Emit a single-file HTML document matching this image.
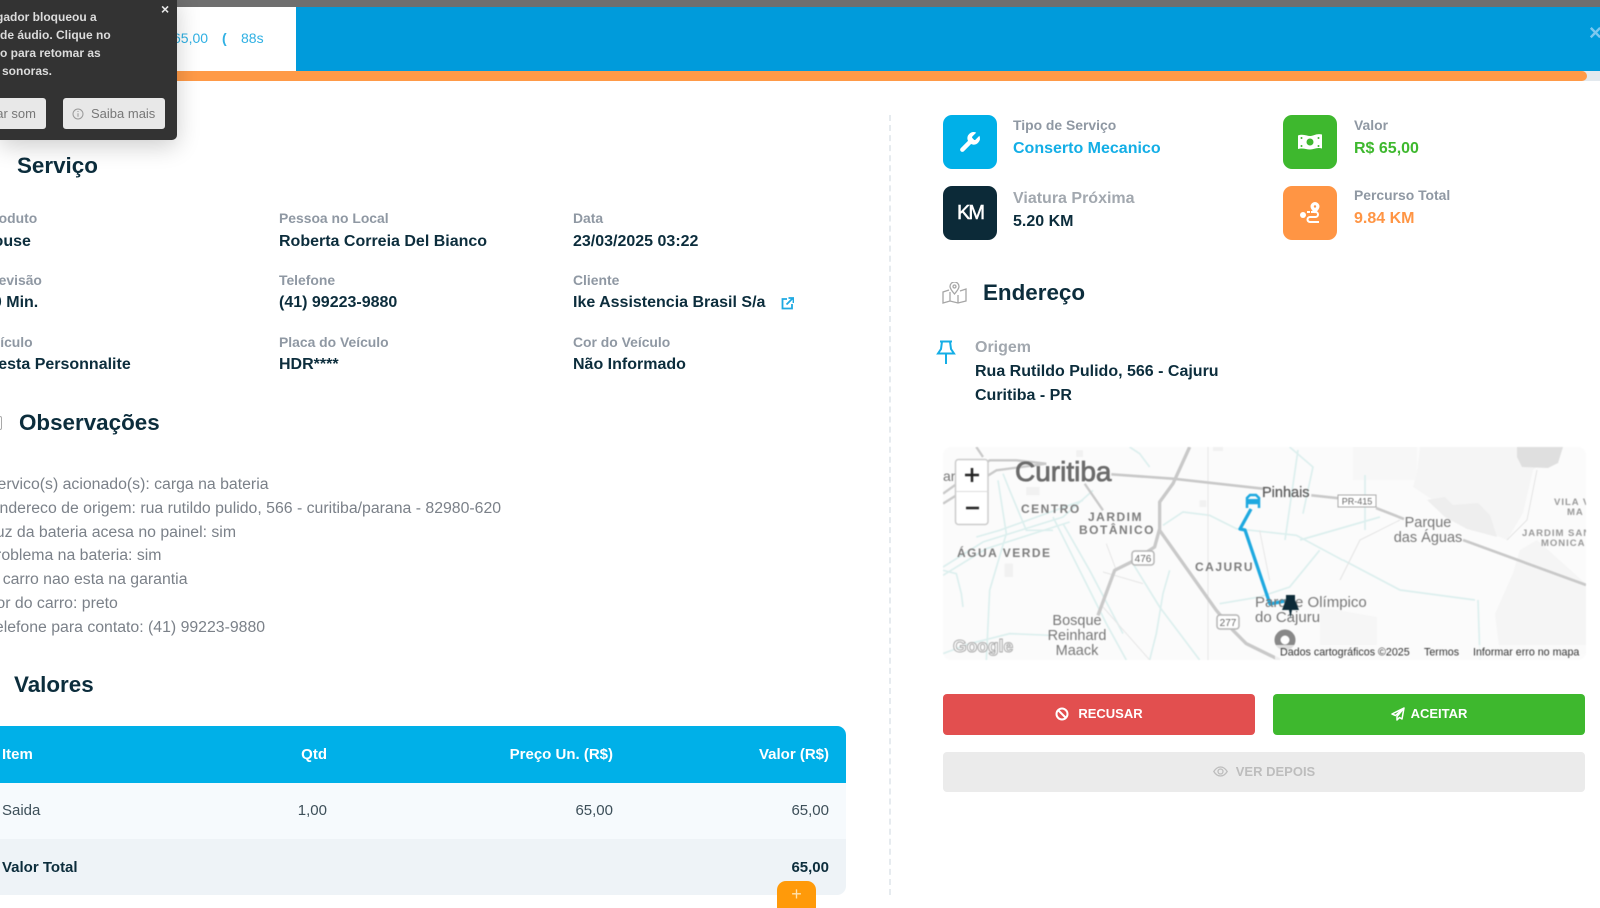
<!DOCTYPE html>
<html lang="pt-BR">
<head>
<meta charset="utf-8">
<title>Serviço</title>
<style>
html,body{margin:0;padding:0;width:1600px;height:908px;overflow:hidden;background:#fff}
body{position:relative;font-family:"Liberation Sans",sans-serif;color:#0c2d3c}
.a{position:absolute;white-space:nowrap}
.lb{font-size:13.9px;font-weight:700;color:#8f98a3;line-height:16px}
.vl{font-size:16px;font-weight:700;color:#0c2d3c;line-height:18px}
.h{font-size:22.4px;font-weight:700;color:#0c2d3c;line-height:26px}
.ic{position:absolute;width:54px;height:54px;border-radius:9px;display:flex;align-items:center;justify-content:center}
.ob{position:absolute;font-size:15.84px;line-height:24px;color:#7b8189;white-space:nowrap}
.btn{position:absolute;box-sizing:border-box;padding-bottom:2px;border-radius:4px;display:flex;align-items:center;justify-content:center;gap:9px;font-size:13px;font-weight:700;color:#fff}
.tr{position:absolute;left:0;width:846px}
.th{font-size:15px;font-weight:700;line-height:18px;color:#fff}
.td{font-size:15px;line-height:18px;color:#3d4f59}
.tt{font-size:15px;font-weight:700;line-height:18px;color:#0c2d3c}
.pt{font-size:12px;font-weight:700;line-height:18px;color:#dcdcdc}
</style>
</head>
<body>
<!-- top bars -->
<div class="a" style="left:0;top:0;width:1600px;height:7px;background:#6f6f6f"></div>
<div class="a" style="left:0;top:7px;width:1600px;height:64px;background:#009bdb"></div>
<div class="a" style="left:0;top:7px;width:296px;height:64px;background:#fff"></div>
<div class="a" style="left:173px;top:29px;font-size:14px;line-height:18px;color:#2fb0e3">65,00</div>
<div class="a" style="left:222px;top:29px;font-size:14px;line-height:18px;color:#2fb0e3;font-weight:700">(</div>
<div class="a" style="left:241px;top:29px;font-size:14px;line-height:18px;color:#2fb0e3">88s</div>
<div class="a" style="left:1589px;top:22px;font-size:22px;line-height:22px;color:#7cc8ef;font-weight:700">×</div>
<div class="a" style="left:0;top:71px;width:1600px;height:10px;background:#e3e9ee"></div>
<div class="a" style="left:0;top:71px;width:1587px;height:10px;background:#ff9a47;border-radius:0 5px 5px 0"></div>

<!-- left column -->
<div class="a h" style="left:17px;top:153px">Serviço</div>

<div class="a lb" style="left:-16px;top:210px">Produto</div>
<div class="a vl" style="left:-18px;top:233px">House</div>
<div class="a lb" style="left:279px;top:210px">Pessoa no Local</div>
<div class="a vl" style="left:279px;top:233px">Roberta Correia Del Bianco</div>
<div class="a lb" style="left:573px;top:210px">Data</div>
<div class="a vl" style="left:573px;top:233px">23/03/2025 03:22</div>

<div class="a lb" style="left:-16px;top:272px">Previsão</div>
<div class="a vl" style="left:-16px;top:294px">60 Min.</div>
<div class="a lb" style="left:279px;top:272px">Telefone</div>
<div class="a vl" style="left:279px;top:294px">(41) 99223-9880</div>
<div class="a lb" style="left:573px;top:272px">Cliente</div>
<div class="a vl" style="left:573px;top:294px">Ike Assistencia Brasil S/a</div>
<svg class="a" style="left:781px;top:297px" width="13" height="13" viewBox="0 0 13 13" fill="none" stroke="#1fa9e2" stroke-width="1.8"><path d="M6 2H1.500v9.500H11V7"/><path d="M5.500 7.500 11.500 1.500M7.500 1h5v5"/></svg>

<div class="a lb" style="left:-16px;top:334px">Veículo</div>
<div class="a vl" style="left:-16px;top:356px">Fiesta Personnalite</div>
<div class="a lb" style="left:279px;top:334px">Placa do Veículo</div>
<div class="a vl" style="left:279px;top:356px">HDR****</div>
<div class="a lb" style="left:573px;top:334px">Cor do Veículo</div>
<div class="a vl" style="left:573px;top:356px">Não Informado</div>

<div class="a h" style="left:19px;top:410px">Observações</div>
<div class="a" style="left:-6px;top:416px;width:8px;height:14px;border:1.5px solid #a9a9a9;border-radius:2px;box-sizing:border-box"></div>

<div class="ob" style="top:473px;left:-13px">Servico(s) acionado(s): carga na bateria</div>
<div class="ob" style="top:497px;left:-11px">Endereco de origem: rua rutildo pulido, 566 - curitiba/parana - 82980-620</div>
<div class="ob" style="top:521px;left:-13px">Luz da bateria acesa no painel: sim</div>
<div class="ob" style="top:544px;left:-14.500px">Problema na bateria: sim</div>
<div class="ob" style="top:568px;left:-14px">O carro nao esta na garantia</div>
<div class="ob" style="top:592px;left:-15px">Cor do carro: preto</div>
<div class="ob" style="top:616px;left:-13px">Telefone para contato: (41) 99223-9880</div>

<div class="a h" style="left:14px;top:672px">Valores</div>

<!-- table -->
<div class="tr" style="top:726px;height:57px;background:#00b0e8;border-radius:0 9px 0 0"></div>
<div class="tr" style="top:783px;height:56px;background:#f6fafd"></div>
<div class="tr" style="top:839px;height:56px;background:#eef3f7;border-radius:0 0 9px 0"></div>
<div class="a th" style="left:2px;top:746px">Item</div>
<div class="a th" style="right:1273px;top:746px">Qtd</div>
<div class="a th" style="right:987px;top:746px">Preço Un. (R$)</div>
<div class="a th" style="right:771px;top:746px">Valor (R$)</div>
<div class="a td" style="left:2px;top:802px">Saida</div>
<div class="a td" style="right:1273px;top:802px">1,00</div>
<div class="a td" style="right:987px;top:802px">65,00</div>
<div class="a td" style="right:771px;top:802px">65,00</div>
<div class="a tt" style="left:2px;top:859px">Valor Total</div>
<div class="a tt" style="right:771px;top:859px">65,00</div>
<div class="a" style="left:777px;top:881px;width:39px;height:30px;background:#ff9a0a;border-radius:9px 9px 0 0;color:#ffe3b0;font-size:18px;line-height:26px;text-align:center">+</div>

<!-- divider -->
<div class="a" style="left:889px;top:115px;height:780px;border-left:2px dashed #e6ebef"></div>

<!-- info cards -->
<div class="ic" style="left:943px;top:115px;background:#00b0e8">
<svg width="25" height="25" style="margin-left:-2px" viewBox="0 0 24 24" fill="#fff"><path d="M14.700 6.300a1 1 0 0 0 0 1.400l1.600 1.600a1 1 0 0 0 1.400 0l3.770-3.770a6 6 0 0 1-7.940 7.940l-6.910 6.910a2.120 2.120 0 0 1-3-3l6.910-6.910a6 6 0 0 1 7.940-7.940l-3.760 3.760z"/></svg>
</div>
<div class="a lb" style="left:1013px;top:117px">Tipo de Serviço</div>
<div class="a vl" style="left:1013px;top:139.500px;color:#13aee6">Conserto Mecanico</div>

<div class="ic" style="left:943px;top:186px;background:#0c2a38;color:#fff;font-size:20px;letter-spacing:-2px;-webkit-text-stroke:.5px #fff">KM</div>
<div class="a vl" style="left:1013px;top:190px;color:#a2a8af">Viatura Próxima</div>
<div class="a vl" style="left:1013px;top:213px">5.20 KM</div>

<div class="ic" style="left:1283px;top:115px;background:#3eb82e">
<svg width="26" height="20" viewBox="0 0 26 20"><path fill="#fff" d="M1 3.500c5-2 9 .5 12 .5s7-3 12-1.500v14c-5-1.500-8 1-12 1s-7-2-12-.5z"/><circle cx="13" cy="10" r="3.500" fill="#3eb82e"/><circle cx="4.500" cy="6" r="1" fill="#3eb82e"/><circle cx="21.500" cy="6" r="1" fill="#3eb82e"/><circle cx="4.500" cy="14" r="1" fill="#3eb82e"/><circle cx="21.500" cy="14" r="1" fill="#3eb82e"/></svg>
</div>
<div class="a lb" style="left:1354px;top:117px">Valor</div>
<div class="a vl" style="left:1354px;top:139.500px;color:#3eb82e">R$ 65,00</div>

<div class="ic" style="left:1283px;top:186px;background:#ff9544">
<svg width="24" height="24" viewBox="0 0 24 24" fill="none" stroke="#fff" stroke-width="2"><path d="M17 11c-2.500-2.500-3.500-4-3.500-5.500a3.500 3.500 0 0 1 7 0C20.500 7 19.500 8.500 17 11z" fill="#fff"/><circle cx="17" cy="5.500" r="1.200" fill="#ff9544" stroke="none"/><circle cx="5" cy="14" r="3" fill="#fff" stroke="none"/><path d="M13 11h4.500a2.500 2.500 0 0 1 0 5H12a2.500 2.500 0 0 0 0 5h9M9 11h3"/></svg>
</div>
<div class="a lb" style="left:1354px;top:187px">Percurso Total</div>
<div class="a vl" style="left:1354px;top:210px;color:#ff9544">9.84 KM</div>

<!-- endereço -->
<svg class="a" style="left:942px;top:282px" width="25" height="22" viewBox="0 0 25 22" fill="none" stroke="#a6a6a6" stroke-width="1.300"><path d="M12.500 12c-3-3.500-4.500-5.500-4.500-7.500a4.500 4.500 0 0 1 9 0c0 2-1.500 4-4.500 7.500z"/><circle cx="12.500" cy="4.500" r="1.500"/><path d="M7 8 1 10v11l7-2 8 2 8-2V7l-6 2M8 10v9M16 13v8"/></svg>
<div class="a h" style="left:983px;top:280px">Endereço</div>

<svg class="a" style="left:936px;top:340px" width="20" height="25" viewBox="0 0 20 25" fill="none" stroke="#14aee6" stroke-width="2"><path d="M4 1.500h12M6 1.500 5 9 2 13.500h16L15 9l-1-7.500M10 13.500V24"/></svg>
<div class="a vl" style="left:975px;top:339px;color:#a2a8af">Origem</div>
<div class="a vl" style="left:975px;top:363px">Rua Rutildo Pulido, 566 - Cajuru</div>
<div class="a vl" style="left:975px;top:387px">Curitiba - PR</div>

<!-- map -->
<svg class="a" style="left:943px;top:447px;border-radius:8px;filter:blur(.4px)" width="643" height="213" viewBox="943 447 643 213" font-family="'Liberation Sans',sans-serif">
<rect x="943" y="447" width="643" height="213" fill="#fbfbfb"/>
<path fill="#f7f7f7" d="M1353 447h64v33h-64z"/>
<path fill="#f5f5f5" d="M1417 473l3-26h140l-27 23-10 43-16 27-47-20-27-20-20-13z"/>
<path fill="#f5f5f5" d="M1513 573l7-23 17-10 49 44v70h-86l-5-40z"/>
<path fill="#f6f6f6" d="M1320 607l57 10v36h-57z"/>
<path fill="#dfdfdf" d="M1517 447h46l-5 16-10 5-26-1-5-10z"/>
<path fill="#eeeeee" d="M1427 500l18-3 8 8 25-2 12 12 7 22-30-8-22-12z"/>
<!-- teal streets, drawn in 3x crop coordinates -->
<g transform="translate(943 447) scale(.3333)" fill="none" stroke="#dcefee" stroke-width="5">
<path d="M0 360 120 285 360 210 450 130M0 385 130 305 380 225M100 270 170 250 420 160"/>
<path d="M165 100 190 260 140 430 130 639M180 80 200 130 250 250 330 250"/>
<path d="M330 210 390 330 490 530 550 639M360 230 440 370 540 560M570 350 650 480 770 639"/>
<path d="M660 235 720 195 800 205 880 245 1060 265 1200 340"/>
<path d="M620 60 590 20 560 0M0 370 40 380 55 440 60 480M0 620 80 590 200 560 320 565"/>
<path d="M680 370 660 440 640 560 620 639M830 470 950 450 1040 420 1130 310M1040 0 1110 60 1080 200"/>
</g>
<g fill="none" stroke="#dcefee" stroke-width="1.700">
<path d="M1343 560 1400 590 1475 600M1478 600 1480 660M1365 475V530M1380 517 1300 540M1298 450 1285 540"/>
</g>
<g transform="translate(943 447) scale(.3333)" fill="none" stroke="#e6e6e6" stroke-width="3">
<path d="M480 375 600 410M480 480 620 639M490 290 520 370M795 0V639M950 250 980 400"/>
</g>
<path d="M1537 470 1527 520 1507 540M1340 580 1360 540 1400 520" fill="none" stroke="#e4e4e4"/>
<g transform="translate(943 447) scale(.3333)" fill="#f1f1f1">
<rect x="400" y="10" width="20" height="20"/><rect x="250" y="120" width="40" height="25"/><rect x="185" y="350" width="25" height="40"/><rect x="770" y="160" width="20" height="20"/><rect x="810" y="0" width="30" height="12"/>
</g>
<g transform="translate(943 447) scale(.3333)" fill="none" stroke="#c9c9c9" stroke-width="10" stroke-linejoin="round">
<path d="M740 0 690 110 650 165V245L635 300 565 345 515 370 465 505"/>
<path d="M650 250 820 490 870 550 910 590 1010 639"/>
<path d="M505 82 690 95 960 125" stroke-width="8"/>
<path d="M1105 145 1200 155" stroke-width="8"/>
<path d="M0 170 160 70 310 50M0 140 140 40 220 40 310 50M100 0 120 30" stroke-width="7"/>
<path d="M425 110 480 190" stroke-width="7"/>
</g>
<path d="M1376 508 1404 519M1463 540 1586 585" fill="none" stroke="#c9c9c9" stroke-width="2.700"/>
<path d="M1251 509 1240 529 1245 530 1270 604 1290 600" fill="none" stroke="#1ea9e0" stroke-width="3.300" stroke-linejoin="round"/>
<path d="M1247 508v-10l3-3h6l3 3v10M1246 503h14" fill="none" stroke="#1ea9e0" stroke-width="2.500"/>
<rect x="1247" y="499" width="12" height="5" fill="#1ea9e0"/>
<g fill="#777">
<text x="1015" y="481" font-size="28" stroke="#6b6b6b" stroke-width=".8" fill="#6b6b6b">Curitiba</text>
<text x="943" y="481" font-size="14">ar</text>
<g font-size="12" letter-spacing="1.500" font-weight="700" fill="#7d7d7d">
<text x="1021" y="513">CENTRO</text>
<text x="1088" y="521">JARDIM</text>
<text x="1079" y="534">BOTÂNICO</text>
<text x="957" y="557">ÁGUA VERDE</text>
<text x="1195" y="571">CAJURU</text>
</g>
<g font-size="14.500" text-anchor="middle">
<text x="1077" y="625">Bosque</text>
<text x="1077" y="640">Reinhard</text>
<text x="1077" y="655">Maack</text>
<text x="1428" y="527">Parque</text>
<text x="1428" y="542">das Águas</text>
</g>
<text x="1262" y="497" font-size="14.500" fill="#5f5f5f" stroke="#5f5f5f" stroke-width=".3">Pinhais</text>
<text x="1255" y="607" font-size="15">Parque Olímpico</text>
<text x="1255" y="622" font-size="15">do Cajuru</text>
<g font-size="9.500" letter-spacing="1" font-weight="700" fill="#999">
<text x="1554" y="505">VILA V</text>
<text x="1567" y="515">MA</text>
<text x="1522" y="536">JARDIM SAN</text>
<text x="1541" y="546">MONICA</text>
</g>
</g>
<rect x="1132" y="551" width="22" height="14" rx="3" fill="#fff" stroke="#b5b5b5" stroke-width="1.500"/><text x="1143" y="562" font-size="10" text-anchor="middle" fill="#666">476</text>
<rect x="1217" y="615" width="22" height="14" rx="3" fill="#fff" stroke="#b5b5b5" stroke-width="1.500"/><text x="1228" y="626" font-size="10" text-anchor="middle" fill="#666">277</text>
<rect x="1338" y="495" width="38" height="12" fill="#fff" stroke="#aaa"/><text x="1357" y="504.500" font-size="9" text-anchor="middle" fill="#666">PR-415</text>
<path d="M1286 595h9v5l4 10h-7l-1.500 8-1.500-8h-7l4-10z" fill="#0c2a38"/>
<circle cx="1285" cy="640" r="7.500" fill="#fff" stroke="#888" stroke-width="6"/>
<rect x="1275" y="645" width="311" height="15" fill="#fbfbfb" fill-opacity=".75"/>
<text x="953" y="652" font-size="17.500" font-weight="700" fill="#fff" stroke="#aaa" stroke-width="1">Google</text>
<g font-size="10.700" fill="#333">
<text x="1280" y="655.500">Dados cartográficos ©2025</text>
<text x="1424" y="655.500">Termos</text>
<text x="1473" y="655.500">Informar erro no mapa</text>
</g>
<rect x="955.500" y="459.500" width="32.500" height="65" rx="3" fill="#fff" stroke="#ccc" stroke-width="1.500"/>
<path d="M956 491.500h32" stroke="#ddd"/>
<path d="M965 475h14M972 468v14M966 508h13" stroke="#222" stroke-width="2.500"/>
</svg>

<!-- buttons -->
<div class="btn" style="left:943px;top:694px;width:312px;height:41px;background:#e24f4f">
<svg width="14" height="14" viewBox="0 0 14 14" fill="none" stroke="#fff" stroke-width="2"><circle cx="7" cy="7" r="5.500"/><path d="M3 3l8 8"/></svg>RECUSAR</div>
<div class="btn" style="left:1273px;top:694px;width:312px;height:41px;background:#3eb82e;gap:6px">
<svg width="14" height="14" viewBox="0 0 14 14" fill="none" stroke="#fff" stroke-width="1.500"><path d="M13 1 1 7l3.500 1.500L13 1 6 9.500V13l2.500-2.500L11 12z" stroke-linejoin="round"/></svg>ACEITAR</div>
<div class="btn" style="left:943px;top:752px;width:642px;height:40px;background:#ebebeb;color:#bdbdbd;gap:8px">
<svg width="15" height="15" viewBox="0 0 15 15" fill="none" stroke="#bdbdbd" stroke-width="1.300"><path d="M.8 7.500C3 4 5 3 7.500 3s4.500 1 6.700 4.500C12 11 10 12 7.500 12S3 11 .8 7.500z"/><circle cx="7.500" cy="7.500" r="2.500"/></svg>VER DEPOIS</div>

<!-- popup -->
<div class="a" style="left:0;top:-4px;width:177px;height:144px;background:#333;border-radius:0 0 5px 0;box-shadow:0 6px 24px rgba(0,0,0,.2)"></div>
<div class="a pt" style="left:-4px;top:8px">gador bloqueou a</div>
<div class="a pt" style="left:0;top:26px">de áudio. Clique no</div>
<div class="a pt" style="left:0;top:44px">o para retomar as</div>
<div class="a pt" style="left:2px;top:62px">sonoras.</div>
<div class="a" style="left:161px;top:2px;font-size:14px;font-weight:700;line-height:14px;color:#e8e8e8">×</div>
<div class="a" style="left:-30px;top:98px;width:76px;height:31px;background:#e8e8e8;border-radius:3px;font-size:13px;line-height:31px;color:#777;text-align:right"><span style="margin-right:10px">ar som</span></div>
<div class="a" style="left:63px;top:98px;width:102px;height:31px;background:#e8e8e8;border-radius:3px;font-size:13px;line-height:31px;color:#777"><svg style="position:absolute;left:9px;top:10px" width="12" height="12" viewBox="0 0 12 12" fill="none" stroke="#999"><circle cx="6" cy="6" r="5"/><path d="M6 5.200v3.500M6 3v1"/></svg><span style="position:absolute;left:28px">Saiba mais</span></div>
</body>
</html>
